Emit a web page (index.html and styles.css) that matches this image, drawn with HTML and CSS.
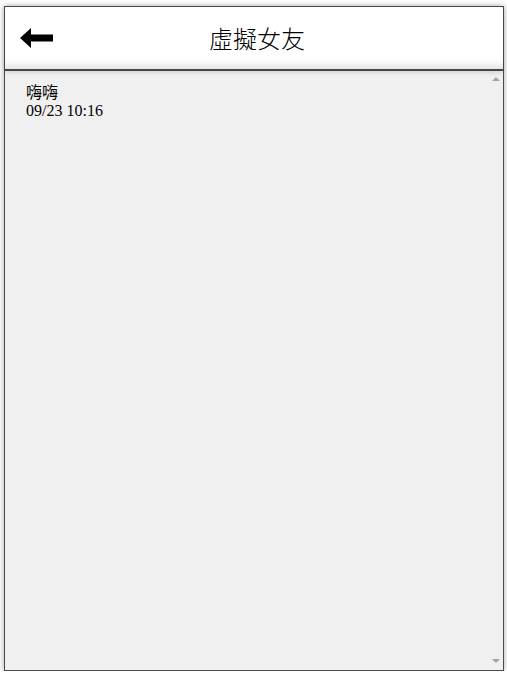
FILE: index.html
```html
<!DOCTYPE html>
<html lang="zh-Hant">
<head>
<meta charset="utf-8">
<title>虛擬女友</title>
<link rel="stylesheet" href="styles.css">
</head>
<body>
<div class="phone">
  <header class="topbar">
    <button class="back" aria-label="返回">
      <svg width="34" height="22" viewBox="0 0 34 22">
        <polygon points="0,11 11,1 11,7.5 33,7.5 33,14.5 11,14.5 11,21" fill="#000"/>
      </svg>
    </button>
    <h1 class="title">虛擬女友</h1>
  </header>
  <div class="body">
    <div class="messages">
      <div class="msg">
        <div class="msg-text">嗨嗨</div>
        <div class="msg-time">09/23 10:16</div>
      </div>
    </div>
    <div class="rail">
      <span class="arrow up"></span>
      <span class="arrow down"></span>
    </div>
  </div>
</div>
</body>
</html>
```
FILE: styles.css
```css
html, body {
  margin: 0;
  padding: 0;
  background: #fff;
}
body {
  padding: 6px 4px 0 4px;
}
.phone {
  width: 500px;
  height: 665px;
  box-sizing: border-box;
  border: 1px solid #4a4a4a;
  box-shadow: 0 0 6px rgba(0,0,0,0.35);
  display: flex;
  flex-direction: column;
  background: #f0f0f0;
}
.topbar {
  height: 64px;
  box-sizing: border-box;
  background: #fff;
  border-bottom: 2px solid #464646;
  box-shadow: inset 0 -9px 8px -6px rgba(0,0,0,0.13), 0 2px 4px rgba(0,0,0,0.12);
  display: flex;
  align-items: center;
  flex: none;
}
.back {
  border: 0;
  background: none;
  padding: 0;
  margin: 0 0 0 15px;
  width: 34px;
  height: 22px;
  display: flex;
}
.title {
  flex: 1;
  margin: 0;
  padding-right: 43px;
  text-align: center;
  font-family: "Noto Sans CJK TC", sans-serif;
  font-weight: 300;
  font-size: 24px;
  line-height: 30px;
  color: #000;
}
.body {
  flex: 1;
  display: flex;
  min-height: 0;
}
.messages {
  flex: 1;
  padding: 13px 0 0 21px;
}
.msg {
  font-family: "Liberation Serif", "Noto Sans CJK TC", serif;
  font-size: 16px;
  line-height: 18px;
  color: #000;
}
.rail {
  width: 15px;
  display: flex;
  flex-direction: column;
  justify-content: space-between;
  align-items: center;
  padding: 6px 0 7px;
}
.arrow {
  width: 0;
  height: 0;
  border-left: 4px solid transparent;
  border-right: 4px solid transparent;
}
.arrow.up {
  border-bottom: 4px solid #a3a3a3;
}
.arrow.down {
  border-top: 4px solid #a3a3a3;
}
```
